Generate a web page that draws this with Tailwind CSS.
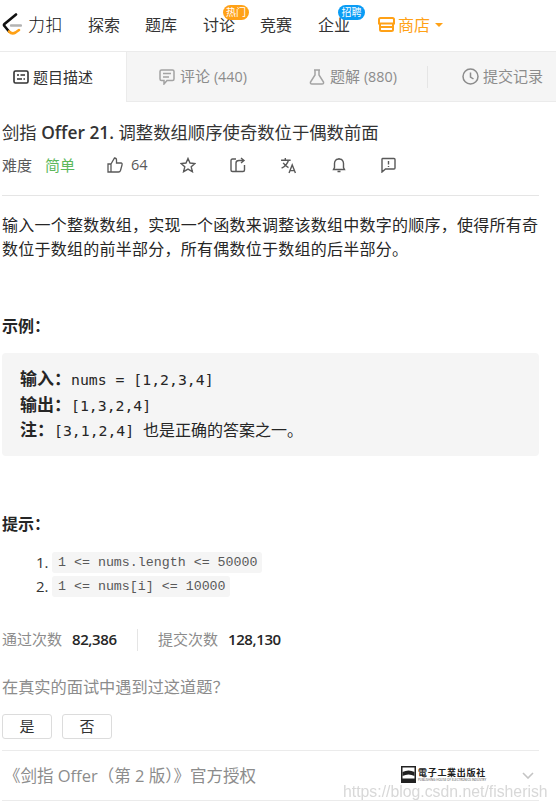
<!DOCTYPE html>
<html lang="zh-CN">
<head>
  <meta charset="UTF-8" />
  <title>剑指 Offer 21</title>
  <script src="https://cdn.jsdelivr.net/npm/@tailwindcss/browser@4"></script>
</head>
<body class="bg-white w-[556px] h-[811px] overflow-hidden relative font-['Open_Sans','Noto_Sans_CJK_SC',sans-serif] text-[#262626]">
  <!-- top nav -->
  <header class="h-[52px] flex items-center border-b border-[#ebebeb] text-[16px] leading-[24px] text-[#333]">
    <div class="flex items-center w-[88px] pl-[2px] shrink-0 -mt-[2px]">
      <svg width="20" height="24" viewBox="0 0 20 24" fill="none" class="shrink-0">
        <path d="M14 1.5 L2.5 11 Q1.5 12 2.5 13 L7 18.5" stroke="#111" stroke-width="2.6" stroke-linecap="round" />
        <path d="M7 18.5 Q10 21.5 13.5 19.5 L17 17" stroke="#ffa116" stroke-width="2.6" stroke-linecap="round" />
        <path d="M9 12.5 H19" stroke="#b3b3b3" stroke-width="2.4" stroke-linecap="round" />
      </svg>
      <span class="ml-[6px] text-[17px] leading-none text-[#111] font-light tracking-[0.5px]">力扣</span>
    </div>
    <nav class="flex items-center -mt-[2px]">
      <a class="w-[57px]">探索</a>
      <a class="w-[58px]">题库</a>
      <a class="w-[57px] relative">讨论
        <span class="absolute left-[20px] top-[-8px] w-[26px] h-[15px] rounded-full bg-[#ffa116] text-white text-[10px] leading-[15px] text-center">热门</span>
      </a>
      <a class="w-[58px]">竞赛</a>
      <a class="w-[60px] relative">企业
        <span class="absolute left-[20px] top-[-8px] w-[27px] h-[15px] rounded-full bg-[#0a9cf5] text-white text-[10px] leading-[15px] text-center">招聘</span>
      </a>
      <a class="flex items-center text-[#ffa116]">
        <svg width="17" height="15" viewBox="0 0 17 15" fill="none" stroke="#ffa116" stroke-width="2" class="mr-[3px]">
          <path d="M1 6.5 V2.5 Q1 1 2.5 1 H14.5 Q16 1 16 2.5 V6.5 Z" />
          <path d="M2 6.5 V12.5 Q2 14 3.5 14 H13.5 Q15 14 15 12.5 V6.5" />
          <path d="M2 10 H15" />
        </svg>
        商店
        <span class="ml-[5px] mt-[1px] w-0 h-0 border-x-[4px] border-x-transparent border-t-[4px] border-t-[#ffa116]"></span>
      </a>
    </nav>
  </header>

  <!-- tabs -->
  <div class="h-[50px] flex text-[15px] text-[#8c8c8c] border-b border-[#ebebeb] bg-[#f5f5f5]">
    <div class="w-[127px] -mb-px bg-white flex items-center pl-[13px] text-[#333] border-r border-[#ebebeb] shrink-0">
      <svg width="16" height="14" viewBox="0 0 16 14" fill="none" class="mr-[4px]">
        <rect x="1" y="1" width="14" height="12" rx="1.5" stroke="#333" stroke-width="1.6" />
        <path d="M4 5 H6 M7.5 5 H12 M4 9 H9 M10.5 9 H12" stroke="#333" stroke-width="1.5" />
      </svg>
      题目描述
    </div>
    <div class="w-[150px] flex items-center pl-[32px] shrink-0">
      <svg width="16" height="16" viewBox="0 0 16 16" fill="none" stroke="#a3a3a3" stroke-width="1.5" class="mr-[5px]">
        <path d="M2.5 1 H13.5 Q15 1 15 2.5 V10 Q15 11.5 13.5 11.5 H8 L5 15 V11.5 H2.5 Q1 11.5 1 10 V2.5 Q1 1 2.5 1 Z" />
        <path d="M4 4.5 H12 M4 8 H10" />
      </svg>
      <span>评论 <span class="text-[14.3px]">(440)</span></span>
    </div>
    <div class="w-[151px] flex items-center pl-[32px] shrink-0 relative">
      <svg width="16" height="16" viewBox="0 0 16 16" fill="none" stroke="#a3a3a3" stroke-width="1.5" class="mr-[5px]">
        <path d="M5 1 H11 M6 1 V6 L1.5 13 Q1 15 3 15 H13 Q15 15 14.5 13 L10 6 V1" />
      </svg>
      <span>题解 <span class="text-[14.3px]">(880)</span></span>
      <span class="absolute right-0 top-[14px] h-[22px] w-px bg-[#e5e5e5]"></span>
    </div>
    <div class="flex items-center pl-[34px] whitespace-nowrap">
      <svg width="17" height="17" viewBox="0 0 17 17" fill="none" stroke="#8c8c8c" stroke-width="1.5" class="mr-[4px]">
        <circle cx="8.5" cy="8.5" r="7.5" />
        <path d="M8.5 4.5 V9 L11.5 11" />
      </svg>
      提交记录
    </div>
  </div>

  <main class="pl-[2px] pr-[17px]">
    <h1 class="mt-[18px] text-[17.35px] leading-[24px] font-normal text-[#333] whitespace-nowrap">剑指 <span class="font-semibold">Offer 21.</span> 调整数组顺序使奇数位于偶数前面</h1>

    <div class="mt-[9px] h-[24px] flex items-center text-[15px] text-[#595959]">
      <span class="w-[43px]">难度</span>
      <span class="w-[62px] text-[#5cb85c]">简单</span>
      <svg width="16" height="16" viewBox="0 0 16 16" fill="none" stroke="#595959" stroke-width="1.3">
        <path d="M1 7 H4 V15 H1 Z M4 7 L7.5 1 Q9.5 1 9.5 3 V6 H14 Q15.5 6 15 8 L13.5 13.5 Q13 15 11.5 15 H4" />
      </svg>
      <span class="ml-[8px] w-[49px] text-[14.5px]">64</span>
      <svg width="16" height="16" viewBox="0 0 16 16" fill="none" stroke="#595959" stroke-width="1.4">
        <path d="M8 1.5 L10 6 L15 6.5 L11.2 9.8 L12.4 14.7 L8 12.1 L3.6 14.7 L4.8 9.8 L1 6.5 L6 6 Z" />
      </svg>
      <svg width="16" height="16" viewBox="0 0 16 16" fill="none" stroke="#595959" stroke-width="1.4" class="ml-[34px]">
        <path d="M6 2 H2.5 Q1 2 1 3.5 V13 Q1 14.5 2.5 14.5 H13 Q14.5 14.5 14.5 13 V8 M6 14 V6 Q6 3.5 9 3.5 H13 M11 1 L14 3.5 L11 6" />
      </svg>
      <svg width="17" height="17" viewBox="0 0 16 16" fill="none" stroke="#595959" stroke-width="1.3" class="ml-[34px]">
        <path d="M1 3 H10 M5 1 V3 M8 3 Q6.5 8 1.5 10.5 M3 5.5 Q5 8.5 8 10 M8.5 15 L11.5 7.5 L14.5 15 M9.5 12.8 H13.5" />
      </svg>
      <svg width="16" height="16" viewBox="0 0 16 16" fill="none" stroke="#595959" stroke-width="1.4" class="ml-[34px]">
        <path d="M2.5 12.5 H13.5 L12.5 10.5 V6.5 Q12.5 2 8 2 Q3.5 2 3.5 6.5 V10.5 Z M8 1 V2 M6.5 14.5 H9.5" />
      </svg>
      <svg width="16" height="16" viewBox="0 0 16 16" fill="none" stroke="#595959" stroke-width="1.4" class="ml-[33px]">
        <path d="M2.5 1.5 H14 Q15 1.5 15 2.5 V11 Q15 12 14 12 H5.5 L2 15 V2.5 Q2 1.5 2.5 1.5 Z M8.5 4 V7.5 M8.5 9 V10" />
      </svg>
    </div>

    <hr class="mt-[18px] border-[#e5e5e5]" />

    <p class="mt-[17px] text-[16px] leading-[24px] tracking-[0.25px] text-[#262626]">输入一个整数数组，实现一个函数来调整该数组中数字的顺序，使得所有奇数位于数组的前半部分，所有偶数位于数组的后半部分。</p>

    <p class="mt-[53px] text-[16px] leading-[24px] font-bold">示例：</p>

    <pre class="mt-[15px] h-[103px] rounded-[4px] bg-[#f5f5f5] pt-[12px] pl-[18px] text-[14.8px] leading-[25.5px] font-['DejaVu_Sans_Mono','Noto_Sans_CJK_SC',monospace]"><span class="block h-[25.5px]"><strong class="font-['Noto_Sans_CJK_SC'] text-[17px] leading-[25px]">输入：</strong>nums = [1,2,3,4]</span><span class="block h-[25.5px]"><strong class="font-['Noto_Sans_CJK_SC'] text-[17px] leading-[25px]">输出：</strong>[1,3,2,4]</span><span class="block h-[25.5px]"><strong class="font-['Noto_Sans_CJK_SC'] text-[17px] leading-[25px]">注：</strong>[3,1,2,4] <span class="font-['Noto_Sans_CJK_SC'] text-[16px] leading-[25px]">也是正确的答案之一。</span></span></pre>

    <p class="mt-[56px] text-[16px] leading-[24px] font-bold">提示：</p>

    <ol class="mt-[16px] pl-[34px] text-[15px] text-[#333] flex flex-col gap-[3px]">
      <li class="flex items-center h-[21px]">
        <span class="w-[16px]">1.</span>
        <code class="h-[21px] w-[210px] px-[6px] rounded-[3px] bg-[#f5f5f5] text-[#595959] text-[13.3px] leading-[21px] font-['Liberation_Mono',monospace] whitespace-pre">1 &lt;= nums.length &lt;= 50000</code>
      </li>
      <li class="flex items-center h-[21px]">
        <span class="w-[16px]">2.</span>
        <code class="h-[21px] w-[178px] px-[6px] rounded-[3px] bg-[#f5f5f5] text-[#595959] text-[13.3px] leading-[21px] font-['Liberation_Mono',monospace] whitespace-pre">1 &lt;= nums[i] &lt;= 10000</code>
      </li>
    </ol>

    <div class="mt-[31px] h-[23px] flex items-center text-[15px] text-[#8c8c8c]">
      <span class="w-[70px]">通过次数</span>
      <span class="w-[65px] text-[#262626] font-semibold text-[15px] tracking-[-0.4px]">82,386</span>
      <span class="w-px h-[22px] bg-[#e5e5e5]"></span>
      <span class="ml-[20px] w-[70px]">提交次数</span>
      <span class="text-[#262626] font-semibold text-[15px] tracking-[-0.4px]">128,130</span>
    </div>

    <p class="mt-[24px] text-[16.2px] leading-[24px] text-[#8c8c8c]">在真实的面试中遇到过这道题？</p>

    <div class="mt-[15px] flex gap-[10px] text-[15px] text-[#333]">
      <button class="w-[50px] h-[25px] rounded-[3px] border border-[#dcdcdc] leading-none">是</button>
      <button class="w-[50px] h-[25px] rounded-[3px] border border-[#dcdcdc] leading-none">否</button>
    </div>

    <div class="mt-[11px] h-[51px] border-y border-[#ebebeb] flex items-center pl-[2px] text-[16.5px] text-[#8c8c8c]">
      <span class="pt-px">《剑指 Offer（第 2 版）》官方授权</span>
      <div class="ml-auto flex items-center mr-[53px] -mt-[2px]">
        <svg width="15" height="17" viewBox="0 0 15 17" class="mr-[2px]">
          <rect width="15" height="17" fill="#222" />
          <rect x="1.5" y="1.5" width="12" height="11" fill="#fff" />
          <path d="M1.5 6 Q7.5 3 13.5 6 V10 Q7.5 7 1.5 10 Z" fill="#222" />
        </svg>
        <div class="flex flex-col w-[68px]">
          <span class="text-[9px] leading-[11px] font-bold tracking-[0.7px] text-[#222] whitespace-nowrap">電子工業出版社</span>
          <span class="text-[3px] leading-[5px] text-[#444] whitespace-nowrap">PUBLISHING HOUSE OF ELECTRONICS INDUSTRY</span>
        </div>
      </div>
      <svg width="12" height="7" viewBox="0 0 12 7" fill="none" stroke="#c4c4c4" stroke-width="1.6" class="absolute left-[522px] top-[772px]">
        <path d="M1 1 L6 6 L11 1" />
      </svg>
    </div>
  </main>

  <span class="absolute left-[343px] top-[782px] text-[15.8px] leading-[20px] text-[#c8c8c8]/70 font-['Liberation_Sans',sans-serif] blur-[0.4px]">https://blog.csdn.net/fisherish</span>
</body>
</html>
